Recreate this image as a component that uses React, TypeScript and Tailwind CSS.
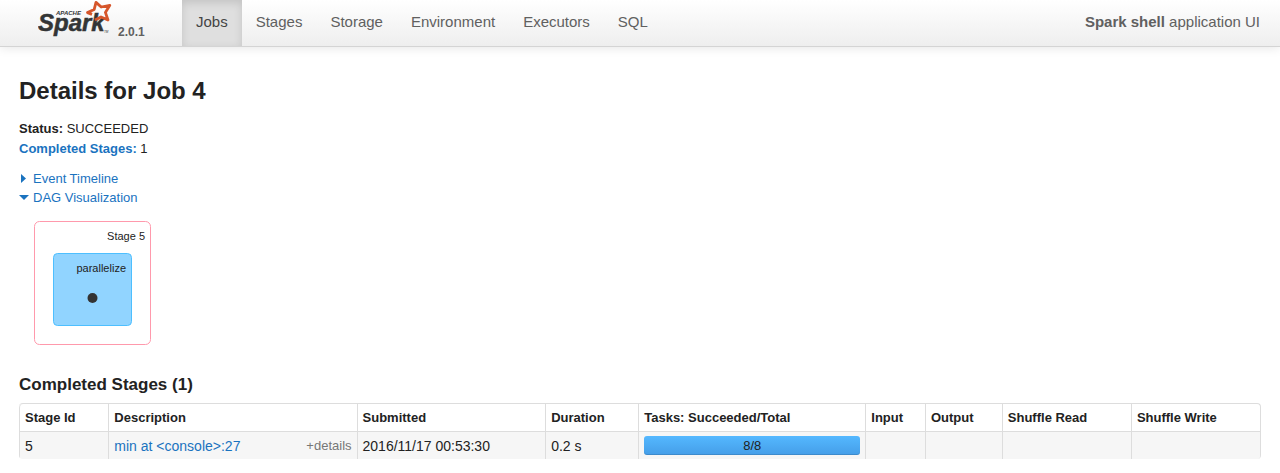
import React from "react";

const tabs = ["Jobs", "Stages", "Storage", "Environment", "Executors", "SQL"];

const columns = [
  { title: "Stage Id", width: "w-[7.2%]" },
  { title: "Description", width: "w-[20%]" },
  { title: "Submitted", width: "w-[15.2%]" },
  { title: "Duration", width: "w-[7.5%]" },
  { title: "Tasks: Succeeded/Total", width: "w-[18.3%]" },
  { title: "Input", width: "w-[4.8%]" },
  { title: "Output", width: "w-[6.2%]" },
  { title: "Shuffle Read", width: "w-[10.4%]" },
  { title: "Shuffle Write", width: "w-[10.4%]" },
];

function SparkLogo() {
  return (
    <svg width="76" height="40" viewBox="0 0 76 40" role="img" aria-label="Apache Spark">
      <g fill="#333536" fontFamily="'Liberation Sans', Arial, sans-serif" fontStyle="italic" fontWeight="700">
        <text x="18" y="15" fontSize="6">APACHE</text>
        <text x="0" y="31" fontSize="24" stroke="#333536" strokeWidth="0.5">Spark</text>
        <text x="66" y="33" fontSize="3" fontWeight="400">TM</text>
      </g>
      <path
        d="M54 14.4 L49.5 12.6 L56.2 9.4 L58 2.4 L63.2 7 L71.8 5.3 L67.4 12.4 L70 20 L63 17 L57 20"
        fill="none"
        stroke="#d6562b"
        strokeWidth="2.8"
        strokeLinejoin="round"
      />
    </svg>
  );
}

function Dag() {
  return (
    <svg
      className="mt-[13px] ml-[14px] block"
      width="119"
      height="126"
      viewBox="0 0 119 126"
      fontFamily="'Liberation Sans', Arial, sans-serif"
      fontSize="11"
      fill="#222"
    >
      <rect x="1.5" y="1.5" width="116" height="123" rx="5" fill="#fff" stroke="#ff99ac" />
      <text x="112" y="20" textAnchor="end">Stage 5</text>
      <rect x="20.5" y="33.5" width="78" height="72" rx="4" fill="#91d4ff" stroke="#4dbfff" />
      <text x="93" y="52" textAnchor="end">parallelize</text>
      <circle cx="59.5" cy="78" r="5" fill="#333" />
    </svg>
  );
}

export default function App() {
  return (
    <div className="bg-white font-['Liberation_Sans',Arial,sans-serif] text-[13px] leading-5 text-[#222]">
      <header className="flex h-[47px] border-b border-[#d4d4d4] bg-linear-to-b from-white to-[#eeeeee] pr-5 pl-[38px] text-[15px] text-[#606060] shadow-[0_1px_10px_rgba(0,0,0,0.1)]">
        <a href="#" className="flex w-36 items-start gap-1 text-[#606060]">
          <SparkLogo />
          <span className="pt-[22px] text-[12px] font-bold">2.0.1</span>
        </a>
        <nav className="flex flex-1">
          {tabs.map((tab) => (
            <a
              key={tab}
              href="#"
              className={
                tab === "Jobs"
                  ? "flex items-center bg-[#dfdfdf] px-[14px] pb-[2px] text-[#444] shadow-[inset_0_3px_8px_rgba(0,0,0,0.125)]"
                  : "flex items-center px-[14px] pb-[2px]"
              }
            >
              {tab}
            </a>
          ))}
        </nav>
        <p className="flex items-center pb-[2px] whitespace-pre">
          <strong>Spark shell</strong> application UI
        </p>
      </header>

      <main className="px-[19px] pt-6">
        <h1 className="text-[24px] leading-10 font-bold">Details for Job 4</h1>
        <ul className="mt-2">
          <li>
            <strong>Status:</strong> SUCCEEDED
          </li>
          <li>
            <a href="#completed" className="font-bold text-[#1a73bf]">Completed Stages:</a> 1
          </li>
        </ul>
        <div className="mt-[10px] flex flex-col items-start text-[#1a73bf]">
          <button type="button" className="flex h-[19px] items-center gap-1">
            <svg width="10" height="10" viewBox="0 0 10 10" fill="currentColor" aria-hidden="true">
              <path d="M2 0 L7 4.5 L2 9 Z" />
            </svg>
            Event Timeline
          </button>
          <button type="button" className="flex h-[19px] items-center gap-1">
            <svg width="10" height="10" viewBox="0 0 10 10" fill="currentColor" aria-hidden="true">
              <path d="M0 2 H10 L5 7 Z" />
            </svg>
            DAG Visualization
          </button>
        </div>
        <Dag />
        <h2 id="completed" className="mt-[29px] text-[17px] leading-5 font-bold">Completed Stages (1)</h2>
        <table className="mt-2 w-full table-fixed border-separate border-spacing-0 overflow-hidden rounded-[4px] border-t border-r border-[#dddddd]">
          <thead>
            <tr>
              {columns.map((column) => (
                <th
                  key={column.title}
                  scope="col"
                  className={`${column.width} h-[27px] border-l border-[#dddddd] px-[5px] pt-px pb-0 text-left font-bold whitespace-nowrap first:rounded-tl-[4px]`}
                >
                  {column.title}
                </th>
              ))}
            </tr>
          </thead>
          <tbody className="text-[14px]">
            <tr className="*:h-7 *:border-t *:border-l *:border-[#dddddd] *:bg-[#f6f6f6] *:px-[5px] *:py-0">
              <td>5</td>
              <td>
                <div className="flex items-center justify-between">
                  <a href="#" className="text-[#1a73bf]">min at &lt;console&gt;:27</a>
                  <button type="button" className="text-[13px] text-[#777]">+details</button>
                </div>
              </td>
              <td>2016/11/17 00:53:30</td>
              <td>0.2 s</td>
              <td>
                <div className="h-[19px] rounded-[3px] bg-linear-to-b from-[#54b8ff] to-[#459ee8] text-center text-[13px] leading-5 shadow-[inset_0_-1px_0_rgba(0,0,0,0.12)]">
                  8/8
                </div>
              </td>
              <td></td>
              <td></td>
              <td></td>
              <td></td>
            </tr>
          </tbody>
        </table>
      </main>
    </div>
  );
}
